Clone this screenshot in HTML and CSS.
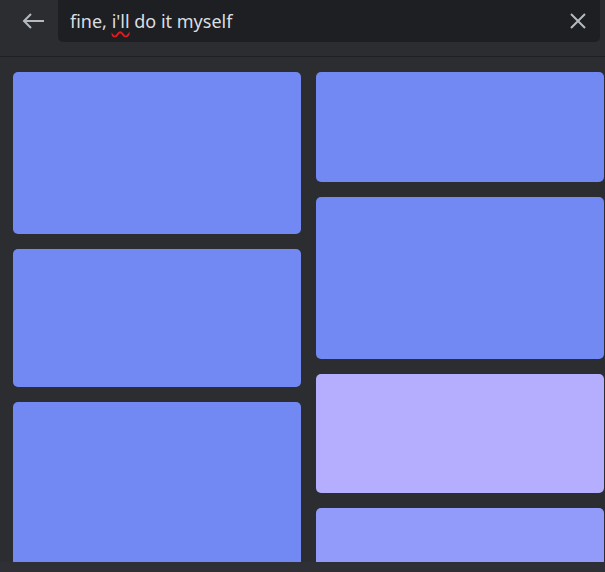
FILE: index.html
```html
<!DOCTYPE html>
<html>
<head>
<meta charset="utf-8">
<link rel="stylesheet" href="styles.css">
</head>
<body>
<div class="app">
  <header class="header">
    <button class="back" aria-label="Back">
      <svg width="22" height="16" viewBox="0 0 22 16"><path d="M22 8H2M9 1L2 8l7 7" fill="none" stroke="#b5bac1" stroke-width="2"/></svg>
    </button>
    <div class="search">
      <span class="query">fine, <span class="misspelt">i'll</span> do it myself</span>
      <svg class="clear" width="18" height="18" viewBox="0 0 18 18"><path d="M2 2L16 16M16 2L2 16" stroke="#b5bac1" stroke-width="2"/></svg>
    </div>
  </header>
  <main class="results">
    <div class="column">
      <div class="tile blue" style="height:162px"></div>
      <div class="tile blue" style="height:138px"></div>
      <div class="tile blue" style="height:200px"></div>
    </div>
    <div class="column">
      <div class="tile blue" style="height:110px"></div>
      <div class="tile blue" style="height:162px"></div>
      <div class="tile lavender" style="height:119px"></div>
      <div class="tile periwinkle" style="height:120px"></div>
    </div>
  </main>
  <footer class="bottom"></footer>
</div>
</body>
</html>
```
FILE: styles.css
```css
html, body {
  margin: 0;
  padding: 0;
  background: #2b2d31;
  overflow: hidden;
}
.app {
  width: 605px;
  height: 572px;
  display: flex;
  flex-direction: column;
  font-family: "Noto Sans", "Open Sans", sans-serif;
}
.header {
  height: 56px;
  flex: none;
  display: flex;
  align-items: flex-start;
  border-bottom: 1px solid #1f2023;
  background: #2b2d31;
  box-sizing: content-box;
}
.back {
  width: 58px;
  height: 42px;
  border: none;
  background: none;
  padding: 0 0 0 8px;
  display: flex;
  align-items: center;
  justify-content: center;
}
.search {
  flex: none;
  width: 542px;
  height: 42px;
  background: #1e1f22;
  border-radius: 0 0 5px 5px;
  display: flex;
  align-items: center;
  padding: 0 13px 0 12px;
  box-sizing: border-box;
}
.query {
  flex: 1;
  color: #dbdee1;
  font-size: 18px;
  line-height: 22px;
  padding-bottom: 1px;
}
.misspelt {
  text-decoration: underline wavy #e8191c;
  text-decoration-thickness: 1.5px;
  text-underline-offset: 3px;
}
.clear {
  flex: none;
}
.results {
  flex: none;
  height: 490px;
  overflow: hidden;
  display: flex;
  gap: 15px;
  padding: 15px 0 0 13px;
  background: #2b2d31;
}
.column {
  width: 288px;
  flex: none;
  display: flex;
  flex-direction: column;
  gap: 15px;
}
.tile {
  border-radius: 5px;
  flex: none;
}
.blue { background: #7289f4; }
.lavender { background: #b5aeff; }
.periwinkle { background: #939bfa; }
.bottom {
  flex: 1;
  background: #2e3035;
}
```
